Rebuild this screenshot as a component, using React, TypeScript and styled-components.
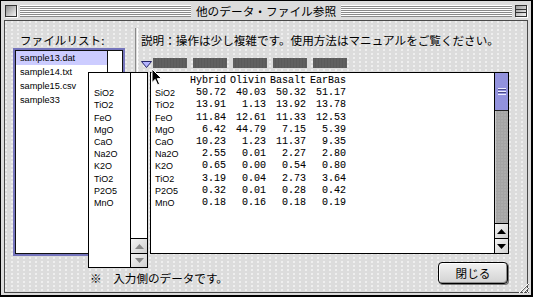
import React from 'react'
import styled, { createGlobalStyle } from 'styled-components'

const JP = `"Noto Sans CJK JP", "Liberation Sans", sans-serif`
const SANS = `"Liberation Sans", Arial, sans-serif`
const MONO = `"Liberation Mono", "DejaVu Sans Mono", monospace`

const GlobalStyle = createGlobalStyle`
  html, body { margin: 0; padding: 0; background: #000; }
  body { font-family: ${JP}; color: #000; }
`

const columns = ['Hybrid', 'Olivin', 'Basalt', 'EarBas']
const rows: [string, string[]][] = [
  ['SiO2', ['50.72', '40.03', '50.32', '51.17']],
  ['TiO2', ['13.91', '1.13', '13.92', '13.78']],
  ['FeO', ['11.84', '12.61', '11.33', '12.53']],
  ['MgO', ['6.42', '44.79', '7.15', '5.39']],
  ['CaO', ['10.23', '1.23', '11.37', '9.35']],
  ['Na2O', ['2.55', '0.01', '2.27', '2.80']],
  ['K2O', ['0.65', '0.00', '0.54', '0.80']],
  ['TiO2', ['3.19', '0.04', '2.73', '3.64']],
  ['P2O5', ['0.32', '0.01', '0.28', '0.42']],
  ['MnO', ['0.18', '0.16', '0.18', '0.19']],
]
const files = ['sample13.dat', 'sample14.txt', 'sample15.csv', 'sample33']

const Window = styled.div`
  position: relative;
  width: 533px;
  height: 297px;
  box-sizing: border-box;
  border: 1px solid #000;
  border-right-width: 2px;
  border-bottom-width: 2px;
  background: #dcdcdc;
  display: flex;
  flex-direction: column;
`

const TitleBar = styled.div`
  height: 19px;
  flex: none;
  display: flex;
  align-items: center;
  gap: 3px;
  padding: 0 4px;
`

const WinBox = styled.div<{ $shade?: boolean }>`
  width: 12px;
  height: 12px;
  box-sizing: border-box;
  border: 1px solid #333;
  background: ${(p) =>
    p.$shade
      ? 'linear-gradient(to bottom, transparent 3px, #333 3px 4px, transparent 4px 6px, #333 6px 7px, transparent 7px), linear-gradient(135deg, #9a9a9a, #f4f4f4)'
      : 'linear-gradient(135deg, #8c8c8c, #f4f4f4)'};
  box-shadow: 1px 1px 0 #fff;
`

const Stripes = styled.div`
  flex: 1;
  height: 12px;
  background: repeating-linear-gradient(to bottom, #fff 0 1px, #8a8a8a 1px 2px);
`

const Title = styled.div`
  font-size: 11.7px;
  line-height: 19px;
  padding: 0 2px;
  white-space: nowrap;
`

const Panel = styled.div`
  position: relative;
  flex: 1;
  margin: 0 3px 2px;
  border: 1px solid #4a4a4a;
  background-color: #dcdcdc;
  background-image: radial-gradient(circle at 1px 1px, rgba(255, 255, 255, 0.85) 0.6px, transparent 0.9px);
  background-size: 6px 4px;
  display: grid;
  grid-template-rows: 235px 1fr;
`

const Main = styled.div`
  display: flex;
`

const LeftCol = styled.div`
  width: 130px;
  padding: 12px 0 0 8px;
  box-sizing: border-box;
`

const Label = styled.div`
  font-size: 11.6px;
  line-height: 14px;
  height: 14px;
  padding-left: 7px;
  margin-bottom: 1px;
  white-space: nowrap;
`

const ListRing = styled.div`
  width: 112px;
  height: 208px;
  box-sizing: border-box;
  border: 2px solid #7474bc;
`

const ListFrame = styled.div`
  height: 100%;
  box-sizing: border-box;
  border: 1px solid #111;
  background: #fff;
  display: flex;
`

const ListItems = styled.div`
  flex: 1;
`

const ListItem = styled.div<{ $selected?: boolean }>`
  height: 14px;
  line-height: 14px;
  padding-left: 4px;
  font-family: ${SANS};
  font-size: 9.2px;
  background: ${(p) => (p.$selected ? '#ccccff' : 'transparent')};
`

const EmptyScroll = styled.div`
  width: 14px;
  border-left: 1px solid #111;
  background: #fff;
`

const Divider = styled.div`
  width: 1px;
  margin-top: 7px;
  height: 227px;
  border-left: 1px solid #8a8a8a;
  border-right: 1px solid #fff;
`

const RightCol = styled.div`
  flex: 1;
  padding: 12px 0 0 3px;
`

const Description = styled.div`
  font-size: 11.6px;
  line-height: 14px;
  height: 14px;
  white-space: nowrap;
`

const TabRow = styled.div`
  margin-top: 11px;
  height: 10px;
  display: flex;
  align-items: flex-end;
`

const TabBlock = styled.div`
  width: 34px;
  height: 10px;
  margin-left: 6px;
  background-color: #5a5a5a;
  background-image: radial-gradient(circle at 1px 1px, #6e6e6e 0.5px, transparent 0.8px);
  background-size: 3px 2px;
  &:first-of-type {
    margin-left: 1px;
  }
`

const TableBox = styled.div`
  margin: 4px 0 0 9px;
  width: 359px;
  height: 182px;
  box-sizing: border-box;
  border: 1px solid #000;
  background: #fff;
  display: flex;
`

const TableBody = styled.div`
  flex: 1;
  padding: 2px 0 0 4px;
  display: grid;
  grid-template-columns: 31px repeat(4, 40px);
  grid-auto-rows: 12.2px;
  align-content: start;
`

const Cell = styled.div<{ $label?: boolean }>`
  line-height: 12.2px;
  white-space: nowrap;
  font-family: ${(p) => (p.$label ? SANS : MONO)};
  font-size: ${(p) => (p.$label ? '9px' : '10px')};
  text-align: ${(p) => (p.$label ? 'left' : 'right')};
  -webkit-text-stroke: ${(p) => (p.$label ? '0' : '0.08px')};
`

const ScrollBar = styled.div<{ $width: number }>`
  width: ${(p) => p.$width}px;
  box-sizing: border-box;
  border-left: 1px solid #000;
  display: flex;
  flex-direction: column;
`

const Thumb = styled.div`
  height: 38px;
  box-sizing: border-box;
  border-bottom: 1px solid #222;
  background-color: #9d9de6;
  background-image: radial-gradient(circle at 1px 1px, #7c7cc8 0.5px, transparent 0.8px);
  background-size: 2px 2px;
  display: flex;
  align-items: center;
  justify-content: center;
`

const Grip = styled.div`
  width: 8px;
  height: 7px;
  background: repeating-linear-gradient(to bottom, #eef 0 1px, #4a4a8a 1px 2px, transparent 2px 3px);
`

const Track = styled.div<{ $empty?: boolean }>`
  flex: 1;
  background-color: ${(p) => (p.$empty ? '#fff' : '#a4a4a4')};
  background-image: ${(p) =>
    p.$empty ? 'none' : 'radial-gradient(circle at 1px 1px, #bdbdbd 0.5px, transparent 0.8px)'};
  background-size: 3px 3px;
  box-shadow: ${(p) => (p.$empty ? 'none' : 'inset 1px 0 0 #c8c8c8')};
`

const ArrowBox = styled.div<{ $h: number }>`
  height: ${(p) => p.$h}px;
  box-sizing: border-box;
  border-top: 1px solid #000;
  background: linear-gradient(135deg, #f4f4f4, #d0d0d0);
  display: flex;
  align-items: center;
  justify-content: center;
`

const Footer = styled.div`
  display: flex;
  align-items: flex-start;
  padding: 6px 19px 0 85px;
`

const Note = styled.div`
  margin-top: 9px;
  font-size: 11.6px;
  line-height: 14px;
  white-space: nowrap;
`

const Button = styled.button`
  margin-left: auto;
  width: 70px;
  height: 22px;
  padding: 0;
  border: 1px solid #000;
  border-radius: 4px;
  background: linear-gradient(#f2f2f2, #d2d2d2);
  box-shadow: inset 1px 1px 0 #fff, inset -1px -1px 0 #8e8e8e, 1px 1px 0 #777;
  font-family: ${JP};
  font-size: 11.6px;
  line-height: 20px;
  color: #000;
`

const Popup = styled.div`
  position: absolute;
  left: 83px;
  top: 51px;
  width: 60px;
  height: 196px;
  box-sizing: border-box;
  border: 1px solid #000;
  background: #fff;
  display: flex;
`

const PopupList = styled.div`
  flex: 1;
  padding: 2px 0 0 5px;
`

const PopupItem = styled.div`
  height: 12.2px;
  line-height: 12.2px;
  font-family: ${SANS};
  font-size: 9px;
`

const Cursor = styled.svg`
  position: absolute;
  left: 146px;
  top: 47px;
`

const GrowBox = styled.svg`
  position: absolute;
  right: 1px;
  bottom: 1px;
`

const Arrow = ({ up, color = '#000' }: { up?: boolean; color?: string }) => (
  <svg width="9" height="5" viewBox="0 0 9 5">
    <polygon points={up ? '4.5,0 9,5 0,5' : '0,0 9,0 4.5,5'} fill={color} />
  </svg>
)

export default function App() {
  return (
    <>
      <GlobalStyle />
      <Window>
        <TitleBar>
          <WinBox />
          <Stripes />
          <Title>他のデータ・ファイル参照</Title>
          <Stripes />
          <WinBox $shade />
        </TitleBar>

        <Panel>
          <Main>
            <LeftCol>
              <Label>ファイルリスト:</Label>
              <ListRing>
                <ListFrame>
                  <ListItems>
                    {files.map((f, i) => (
                      <ListItem key={f} $selected={i === 0}>
                        {f}
                      </ListItem>
                    ))}
                  </ListItems>
                  <EmptyScroll />
                </ListFrame>
              </ListRing>
            </LeftCol>

            <Divider />

            <RightCol>
              <Description>説明：操作は少し複雑です。使用方法はマニュアルをご覧ください。</Description>
              <TabRow>
                <svg width="11" height="7" viewBox="0 0 11 7">
                  <polygon points="0.5,0.5 10.5,0.5 5.5,6.5" fill="#b4b4ff" stroke="#26266a" strokeWidth="1" />
                </svg>
                {columns.concat('').map((c, i) => (
                  <TabBlock key={i} />
                ))}
              </TabRow>
              <TableBox>
                <TableBody>
                  <Cell $label />
                  {columns.map((c) => (
                    <Cell key={c}>{c}</Cell>
                  ))}
                  {rows.map(([name, vals], r) => (
                    <React.Fragment key={r}>
                      <Cell $label>{name}</Cell>
                      {vals.map((v, i) => (
                        <Cell key={i}>{v}</Cell>
                      ))}
                    </React.Fragment>
                  ))}
                </TableBody>
                <ScrollBar $width={14}>
                  <Thumb>
                    <Grip />
                  </Thumb>
                  <Track />
                  <ArrowBox $h={15}>
                    <Arrow up />
                  </ArrowBox>
                  <ArrowBox $h={15}>
                    <Arrow />
                  </ArrowBox>
                </ScrollBar>
              </TableBox>
            </RightCol>
          </Main>

          <Footer>
            <Note>※　入力側のデータです。</Note>
            <Button>閉じる</Button>
          </Footer>

          <Popup>
            <PopupList>
              <PopupItem />
              {rows.map(([name], i) => (
                <PopupItem key={i}>{name}</PopupItem>
              ))}
            </PopupList>
            <ScrollBar $width={17}>
              <Track $empty />
              <ArrowBox $h={15}>
                <Arrow up color="#8a8a8a" />
              </ArrowBox>
              <ArrowBox $h={14}>
                <Arrow color="#8a8a8a" />
              </ArrowBox>
            </ScrollBar>
          </Popup>

          <Cursor width="12" height="18" viewBox="0 0 12 18">
            <path d="M1 1 L1 14.5 L4.2 11.4 L6.6 16.8 L8.6 15.9 L6.3 10.6 L10.6 10.6 Z" fill="#000" stroke="#fff" strokeWidth="1" />
          </Cursor>
        </Panel>

        <GrowBox width="13" height="13" viewBox="0 0 13 13">
          <line x1="12" y1="2" x2="2" y2="12" stroke="#fff" />
          <line x1="12" y1="3" x2="3" y2="12" stroke="#666" />
          <line x1="12" y1="6" x2="6" y2="12" stroke="#fff" />
          <line x1="12" y1="7" x2="7" y2="12" stroke="#666" />
          <line x1="12" y1="10" x2="10" y2="12" stroke="#fff" />
          <line x1="12" y1="11" x2="11" y2="12" stroke="#666" />
        </GrowBox>
      </Window>
    </>
  )
}
